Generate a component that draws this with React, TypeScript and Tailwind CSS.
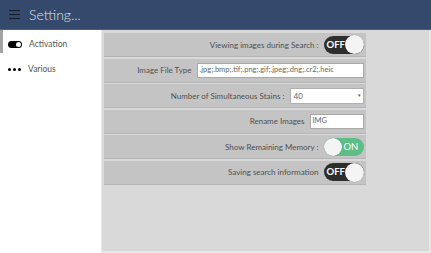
import React from "react";

function Toggle({ on }: { on: boolean }) {
  if (on) {
    return (
      <div className="w-[40px] h-[18px] rounded-full bg-[#5cbd86] flex items-center shrink-0">
        <div className="w-[18px] h-[18px] rounded-full bg-[#f4f4f4] shadow-[0_0_1px_rgba(0,0,0,0.3)]" />
        <span className="text-white text-[9.5px] leading-none pl-[2px]">ON</span>
      </div>
    );
  }
  return (
    <div className="w-[40px] h-[18px] rounded-full bg-[#2e2e2e] flex items-center shrink-0">
      <span className="text-white font-bold text-[9.5px] leading-none pl-[3px]">OFF</span>
      <div className="ml-auto w-[19px] h-[19px] rounded-full bg-[#f4f4f4] shadow-[0_0_1px_rgba(0,0,0,0.3)]" />
    </div>
  );
}

function Row({ children }: { children: React.ReactNode }) {
  return (
    <div className="w-[262px] h-[23px] bg-[#c4c4c4] shadow-[0_1px_0_#b6b6b6] flex items-center justify-end gap-[5px] pr-[2px] shrink-0">
      {children}
    </div>
  );
}

function Label({ children }: { children: React.ReactNode }) {
  return <span className="text-[8px] text-[#505050] whitespace-nowrap leading-none">{children}</span>;
}

export default function App() {
  return (
    <div
      className="w-[431px] h-[253px] flex flex-col bg-white overflow-hidden"
      style={{ fontFamily: "Lato, 'Liberation Sans', sans-serif" }}
    >
      <div className="h-[30px] bg-[#34496b] border-b border-[#4a5d7c] flex items-center shrink-0">
        <div className="ml-[9px] w-[11px] flex flex-col gap-[2.5px]">
          <div className="h-[1.5px] bg-[#141c2a]" />
          <div className="h-[1.5px] bg-[#141c2a]" />
          <div className="h-[1.5px] bg-[#141c2a]" />
        </div>
        <span className="ml-[9px] text-[14px] font-light text-[#dde3ec] leading-none">Setting...</span>
      </div>
      <div className="flex flex-1 min-h-0">
        <div className="w-[101px] bg-white flex flex-col shrink-0">
          <div className="h-[28px] flex items-start">
            <div className="w-[3px] h-[23px] bg-[#a3a3a3]" />
            <div className="h-[28px] flex items-center">
              <div className="ml-[5px] w-[14px] h-[7px] rounded-full bg-black flex items-center justify-end pr-[1px]">
                <div className="w-[5px] h-[5px] rounded-full bg-white" />
              </div>
              <span className="ml-[7px] text-[8.5px] text-[#555] leading-none">Activation</span>
            </div>
          </div>
          <div className="h-[22px] flex items-center">
            <div className="ml-[8px] w-[14px] flex gap-[2px]">
              <div className="w-[3px] h-[3px] rounded-full bg-black" />
              <div className="w-[3px] h-[3px] rounded-full bg-black" />
              <div className="w-[3px] h-[3px] rounded-full bg-black" />
            </div>
            <span className="ml-[6px] text-[8.5px] text-[#555] leading-none">Various</span>
          </div>
        </div>
        <div className="flex-1 bg-[#d9d9d9] border-l-[1.5px] border-r-[2px] border-b-[2px] border-[#e8e8e8] pl-[1.5px] pt-[3px] flex flex-col gap-[2.5px]">
          <Row>
            <Label>Viewing images during Search :</Label>
            <Toggle on={false} />
          </Row>
          <Row>
            <Label>Image File Type</Label>
            <div className="w-[167px] h-[15px] bg-white border border-[#a8a8a8] flex items-center px-[2px] text-[7.5px] text-[#666] leading-none whitespace-nowrap overflow-hidden">
              .jpg;.bmp;.tif;.png;.gif;.jpeg;.dng;.cr2;.heic
            </div>
          </Row>
          <Row>
            <Label>Number of Simultaneous Stains :</Label>
            <div className="w-[74px] h-[16px] bg-white border border-[#b0b0b0] flex items-center pl-[3px] pr-[2px] text-[8px] text-[#666] leading-none">
              <span>40</span>
              <span className="ml-auto text-[5px] text-[#555]">▾</span>
            </div>
          </Row>
          <Row>
            <Label>Rename Images</Label>
            <div className="w-[54px] h-[15px] bg-white border border-[#a8a8a8] flex items-center px-[2px] text-[7.5px] text-[#666] leading-none">
              IMG
            </div>
          </Row>
          <Row>
            <Label>Show Remaining Memory :</Label>
            <Toggle on={true} />
          </Row>
          <Row>
            <Label>Saving search information</Label>
            <Toggle on={false} />
          </Row>
        </div>
      </div>
    </div>
  );
}
